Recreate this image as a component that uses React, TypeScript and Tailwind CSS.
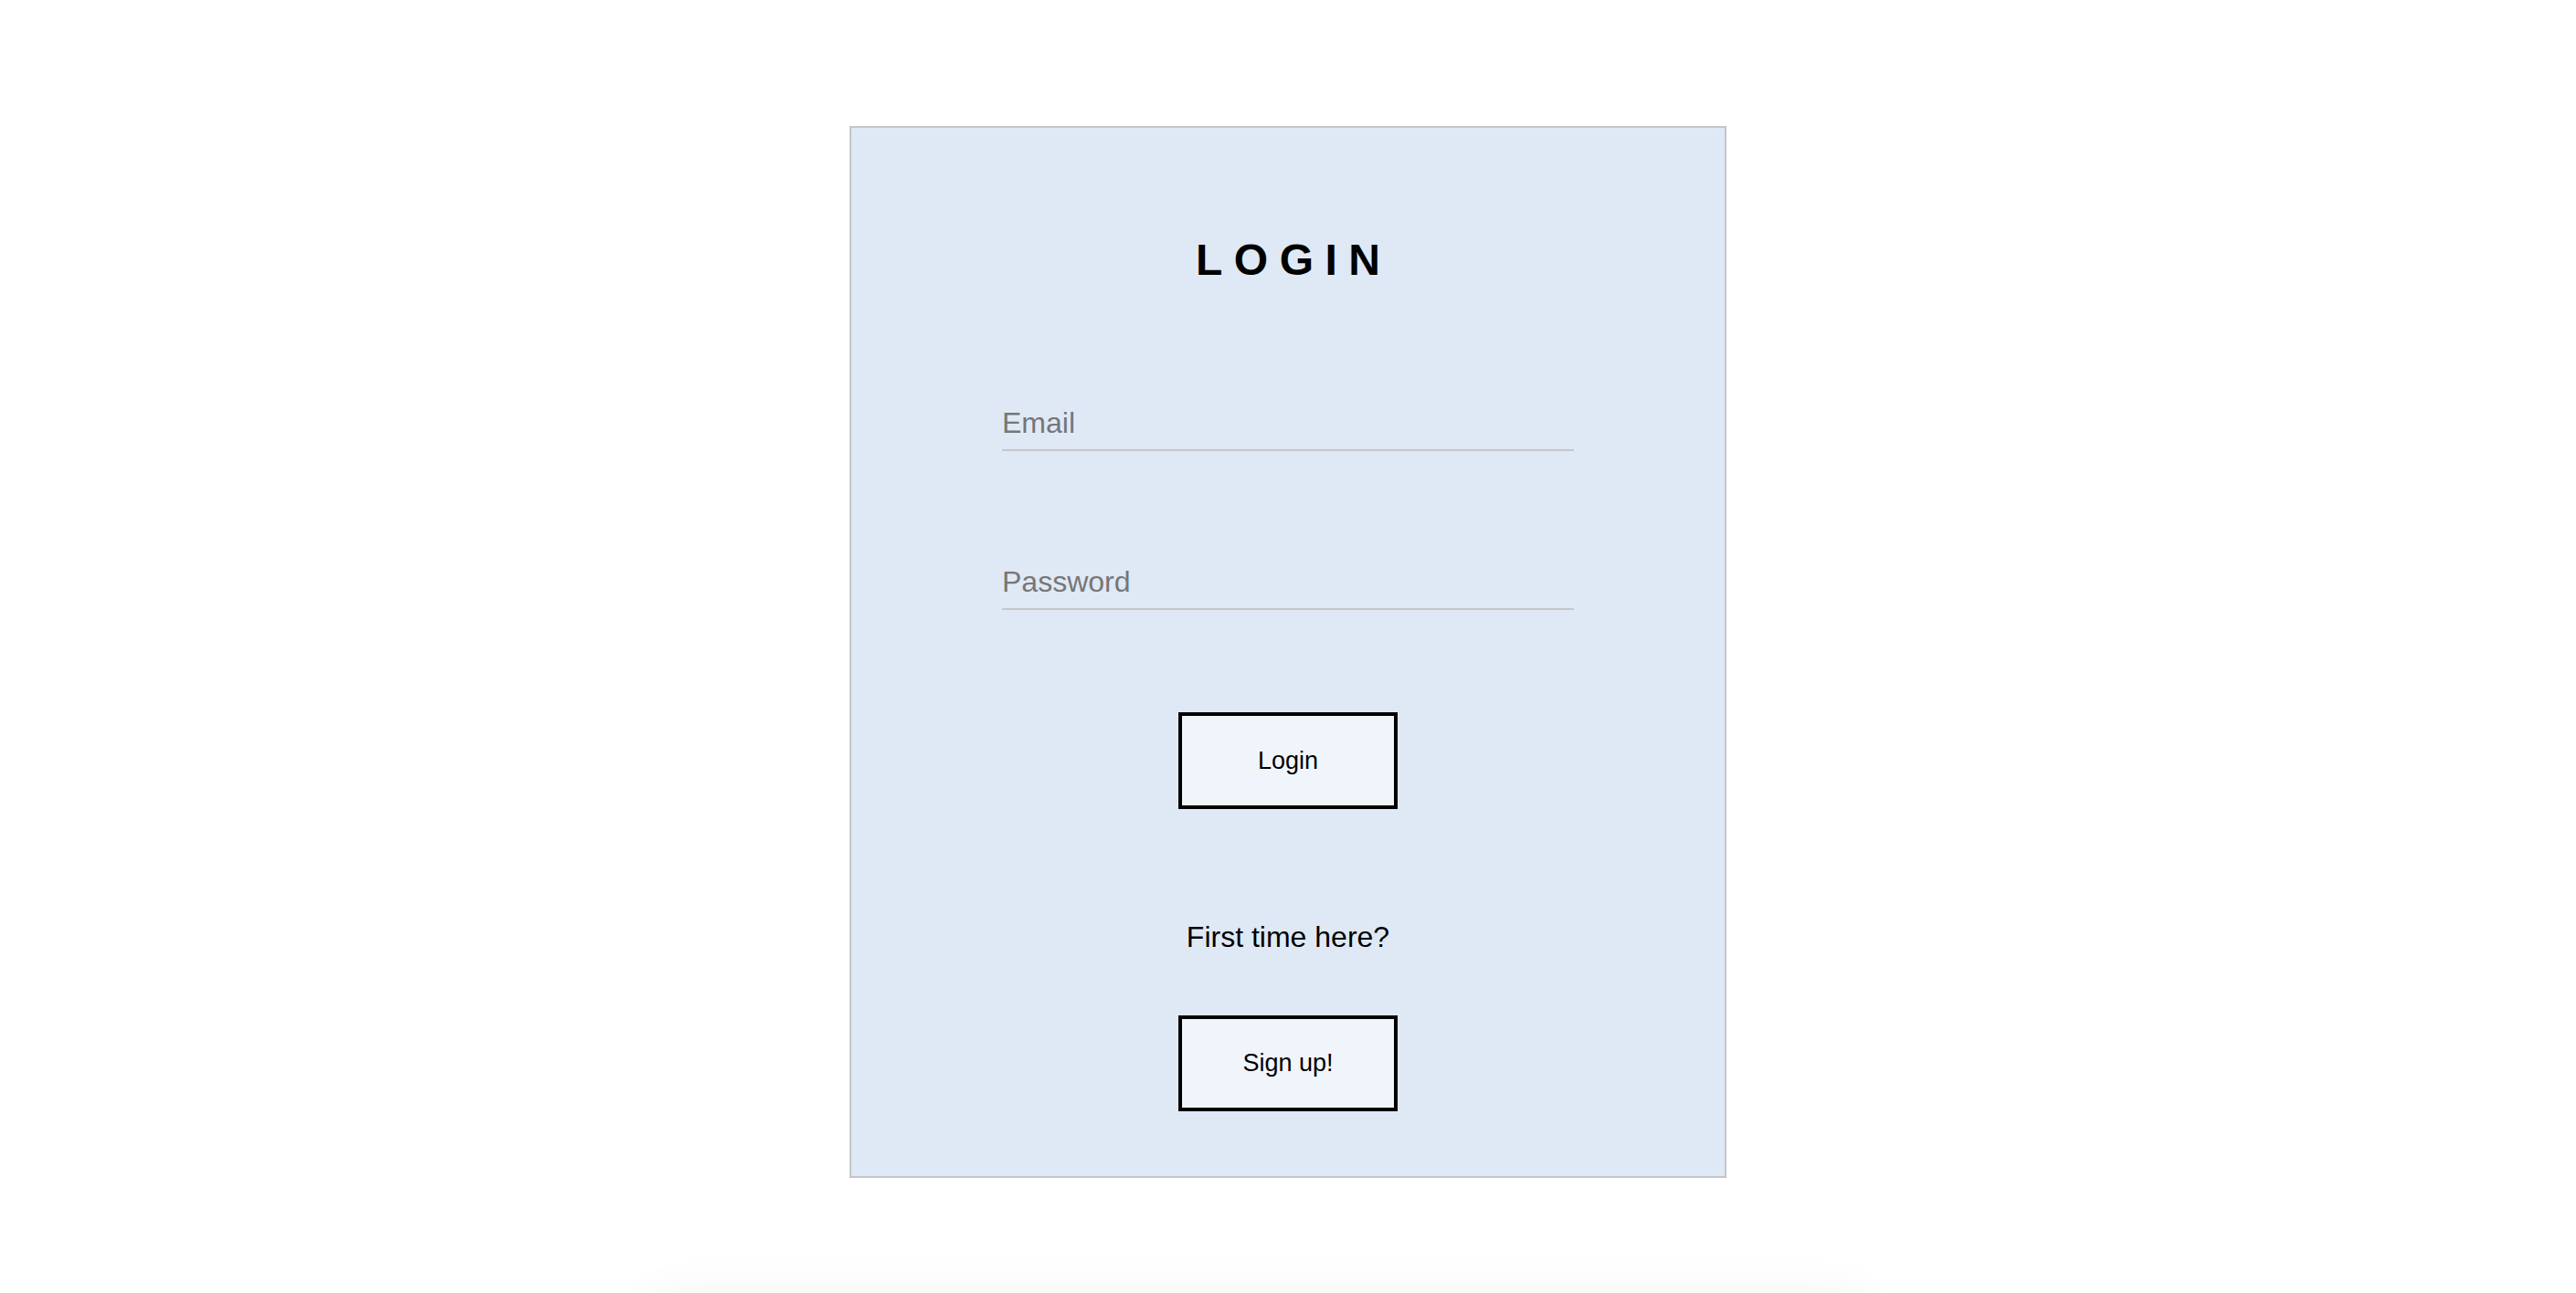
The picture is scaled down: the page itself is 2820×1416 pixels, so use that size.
import React from "react";

export default function App() {
  return (
    <div
      className="min-h-screen w-full bg-white flex flex-col items-center pt-[138px]"
      style={{ fontFamily: '"Liberation Sans", Arial, Helvetica, sans-serif' }}
    >
      <div className="w-[960px] h-[1152px] border-2 border-[#c4c5c9] bg-[#dfe9f5] flex flex-col items-center pt-[121px]">
        <h1 className="text-[48px] leading-none font-bold tracking-[0.26em] pl-[0.26em] text-black h-[48px]">
          LOGIN
        </h1>
        <input
          type="email"
          placeholder="Email"
          className="mt-[125px] block w-[626px] h-[60px] p-0 bg-transparent border-0 border-b-2 border-[#c6c6c6] text-[32px] text-black placeholder:text-[#767676] outline-none"
        />
        <input
          type="password"
          placeholder="Password"
          className="mt-[114px] block w-[626px] h-[60px] p-0 bg-transparent border-0 border-b-2 border-[#c6c6c6] text-[32px] text-black placeholder:text-[#767676] outline-none"
        />
        <button className="mt-[112px] w-[240px] h-[106px] border-4 border-black bg-[#f0f5fc] text-[27px] leading-none text-black">
          Login
        </button>
        <p className="mt-[124px] text-[32px] leading-none text-black h-[32px]">First time here?</p>
        <button className="mt-[70px] w-[240px] h-[105px] border-4 border-black bg-[#f0f5fc] text-[27px] leading-none text-black">
          Sign up!
        </button>
      </div>
      <div className="mt-[130px] mr-[68px] w-[1320px] h-[200px] bg-white shadow-[0_0_50px_rgba(0,0,0,0.06)]" />
    </div>
  );
}
